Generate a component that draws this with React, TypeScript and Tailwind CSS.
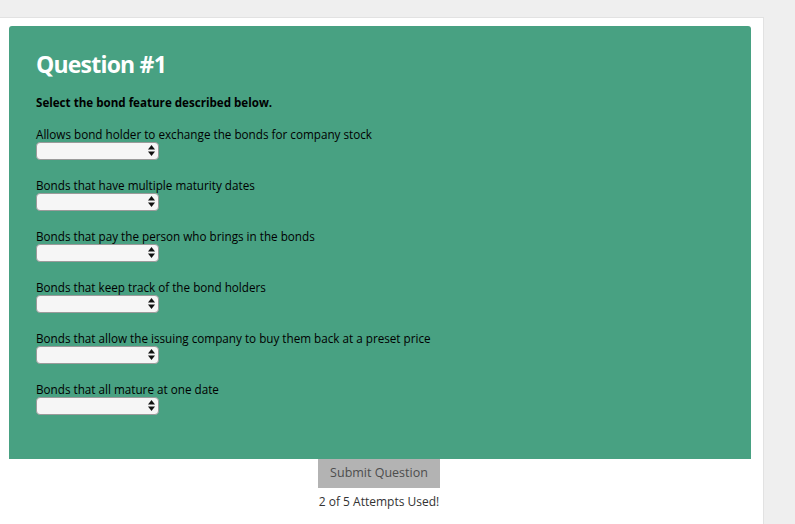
const items = [
  'Allows bond holder to exchange the bonds for company stock',
  'Bonds that have multiple maturity dates',
  'Bonds that pay the person who brings in the bonds',
  'Bonds that keep track of the bond holders',
  'Bonds that allow the issuing company to buy them back at a preset price',
  'Bonds that all mature at one date',
]

function Arrows() {
  return (
    <svg className="absolute right-[4px] top-[3px] w-[7px] h-[11px] pointer-events-none" viewBox="0 0 7 11">
      <path d="M3.5 0 L7 4.5 L0 4.5 Z" fill="#111" />
      <path d="M3.5 11 L7 6.5 L0 6.5 Z" fill="#111" />
    </svg>
  )
}

export default function App() {
  return (
    <div className="min-h-screen bg-[#efefef] pt-[17px] font-['Open_Sans',sans-serif]">
      <div className="w-[764px] min-h-[507px] bg-white border-t border-r border-[#e2e2e2] pt-[8px] pl-[9px] pr-[12px]">
        {/* Question panel */}
        <div className="bg-[#48a182] rounded-t-[3px] px-[27px] pt-[24px] pb-[44px]">
          <h1 className="text-white font-bold text-[23px] leading-[28px] tracking-[-0.8px]">Question #1</h1>
          <p className="mt-[17px] text-black font-bold text-[11.6px] leading-[16px]">
            Select the bond feature described below.
          </p>
          <div className="mt-[16px] flex flex-col gap-[18px]">
            {items.map((text) => (
              <div key={text}>
                <div className="text-black text-[11.7px] leading-[14px]">{text}</div>
                <div className="relative mt-[1px] w-[123px] h-[18px]">
                  <select className="block appearance-none w-full h-full bg-[#f6f6f6] border border-[#9b9b9b] rounded-[4px] text-[11px] outline-none">
                    <option value=""></option>
                  </select>
                  <Arrows />
                </div>
              </div>
            ))}
          </div>
        </div>

        {/* Submit */}
        <div className="flex flex-col items-center">
          <button className="-ml-[2px] w-[122px] h-[29px] bg-[#b3b3b3] text-[#4d4d4d] text-[12.5px]">
            Submit Question
          </button>
          <div className="mt-[6px] -ml-[2px] text-[#333] text-[12px] leading-[16px]">2 of 5 Attempts Used!</div>
        </div>
      </div>
    </div>
  )
}
